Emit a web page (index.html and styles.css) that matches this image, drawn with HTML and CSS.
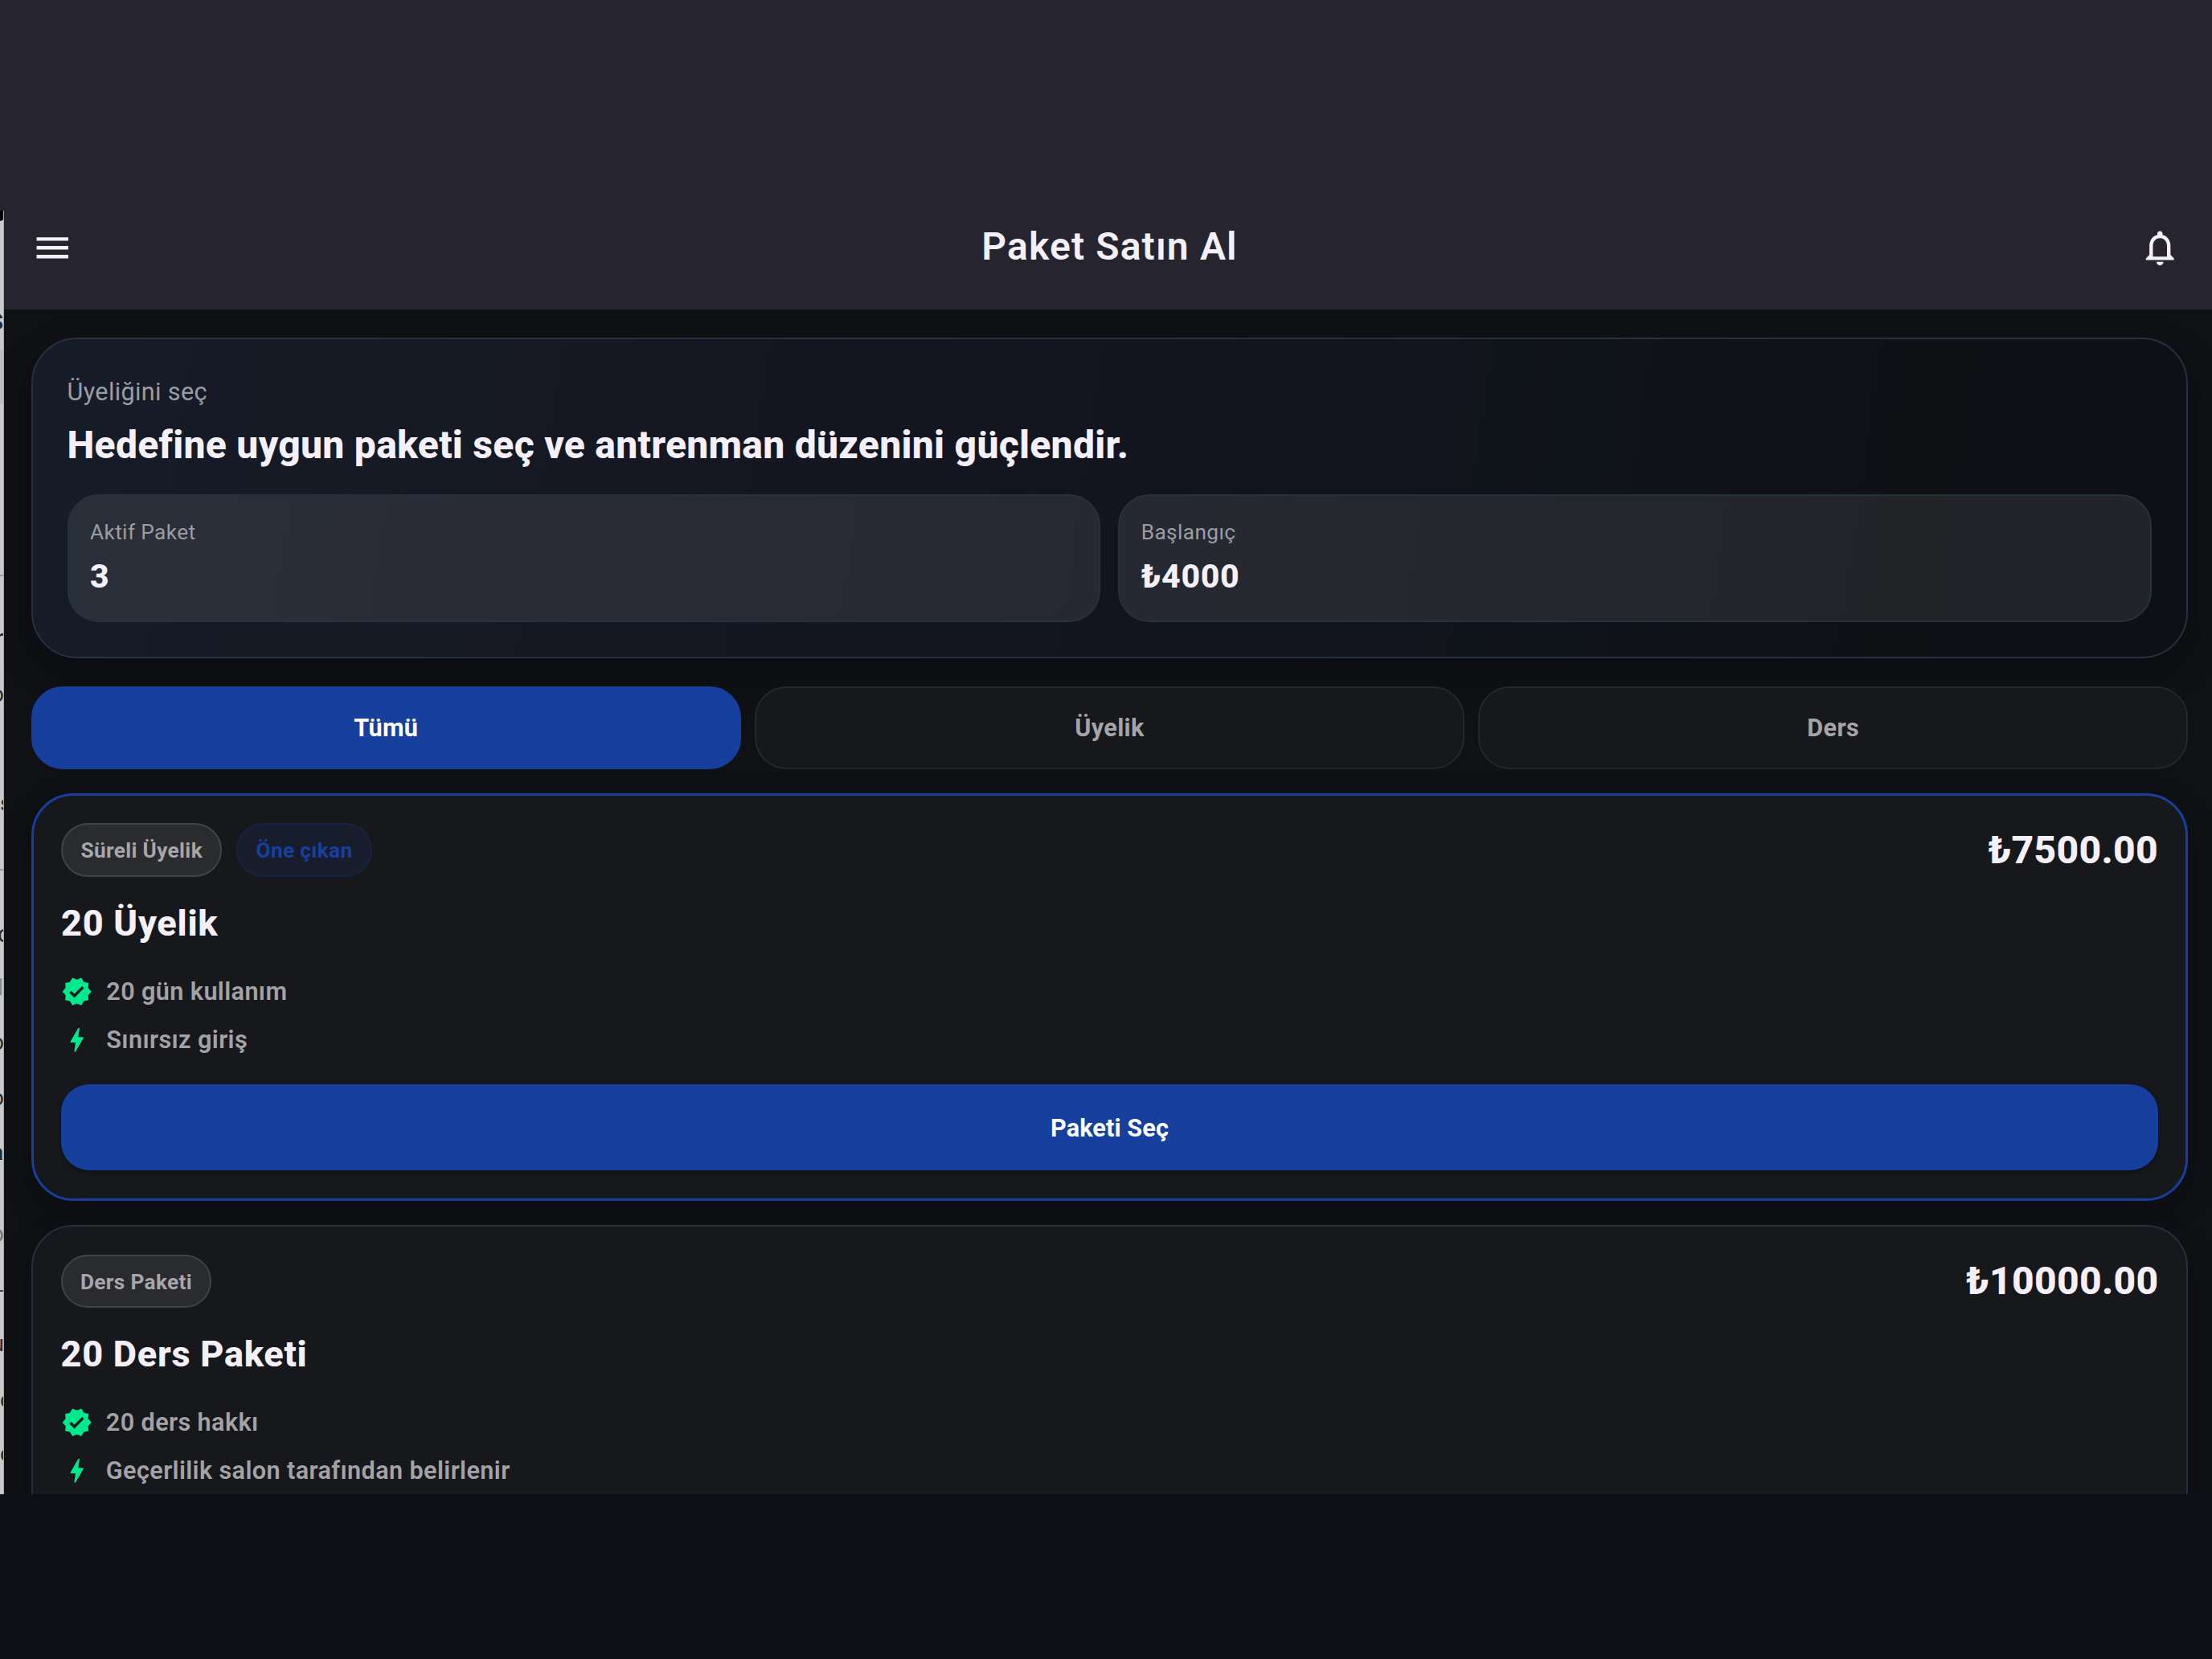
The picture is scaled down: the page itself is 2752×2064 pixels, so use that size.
FILE: index.html
```html
<!DOCTYPE html>
<html lang="tr">
    <head>
        <meta charset="utf-8">
        <title>Paket Satın Al</title>
        <link rel="stylesheet" href="styles.css">
    </head>
    <body>
        <svg width="0" height="0" class="sprite">
            <symbol id="verified" viewBox="0 0 24 24">
                <path d="M23 12l-2.44-2.79.34-3.69-3.61-.82-1.89-3.2L12 2.96 8.6 1.5 6.71 4.69 3.1 5.5l.34 3.7L1 12l2.44 2.79-.34 3.7 3.61.82L8.6 22.5l3.4-1.47 3.4 1.46 1.89-3.19 3.61-.82-.34-3.69L23 12zm-12.91 4.72l-3.8-3.81 1.48-1.48 2.32 2.33 5.85-5.87 1.48 1.48-7.33 7.35z"/>
            </symbol>
            <symbol id="bolt" viewBox="0 0 24 24">
                <path d="M11 21h-1l1-7H7.5c-.88 0-.33-.75-.31-.78C8.48 10.94 10.42 7.54 13.01 3h1l-1 7h3.51c.4 0 .62.19.4.66C12.97 17.55 11 21 11 21z"/>
            </symbol>
        </svg>

        <div class="topband"></div>
        <div class="window">
            <!-- edge of the page underneath -->
            <div class="behind">
                <i class="notch"></i>
                <i class="shade"></i>
                <i class="rule rule1"></i>
                <i class="rule rule2"></i>
                <i class="rule rule3"></i>
                <b class="g1">S</b>
                <span class="g2">r</span>
                <span class="g3">o</span>
                <span class="g4">s</span>
                <span class="g5">c</span>
                <span class="g6">l</span>
                <span class="g7">o</span>
                <span class="g8">o</span>
                <b class="g9">a</b>
                <span class="g10">o</span>
                <span class="g11">u</span>
                <span class="g12">c</span>
                <span class="g13">c</span>
            </div>
            <div class="app">
                <header class="appbar">
                    <svg class="icon menu" viewBox="0 0 24 24"><path d="M3 18h18v-2H3v2zm0-5h18v-2H3v2zm0-7v2h18V6H3z"/></svg>
                    <h1>Paket Satın Al</h1>
                    <svg class="icon bell" viewBox="0 0 24 24"><path d="M12 22c1.1 0 2-.9 2-2h-4c0 1.1.9 2 2 2zm6-6v-5c0-3.07-1.63-5.64-4.5-6.32V4c0-.83-.67-1.5-1.5-1.5s-1.5.67-1.5 1.5v.68C7.64 5.36 6 7.92 6 11v5l-2 2v1h16v-1l-2-2zm-2 1H8v-6c0-2.48 1.51-4.5 4-4.5s4 2.02 4 4.5v6z"/></svg>
                </header>
                <main class="content">
                    <section class="hero">
                        <p class="eyebrow">Üyeliğini seç</p>
                        <h2>Hedefine uygun paketi seç ve antrenman düzenini güçlendir.</h2>
                        <div class="stats">
                            <div class="stat">
                                <p>Aktif Paket</p>
                                <strong>3</strong>
                            </div>
                            <div class="stat">
                                <p>Başlangıç</p>
                                <strong>₺4000</strong>
                            </div>
                        </div>
                    </section>

                    <nav class="tabs">
                        <a class="tab active">Tümü</a>
                        <a class="tab">Üyelik</a>
                        <a class="tab">Ders</a>
                    </nav>

                    <article class="card featured">
                        <div class="card-top">
                            <span class="pill">Süreli Üyelik</span>
                            <span class="pill blue">Öne çıkan</span>
                            <span class="price">₺7500.00</span>
                        </div>
                        <h3>20 Üyelik</h3>
                        <ul>
                            <li><svg><use href="#verified"/></svg>20 gün kullanım</li>
                            <li><svg><use href="#bolt"/></svg>Sınırsız giriş</li>
                        </ul>
                        <button class="select">Paketi Seç</button>
                    </article>

                    <article class="card">
                        <div class="card-top">
                            <span class="pill">Ders Paketi</span>
                            <span class="price">₺10000.00</span>
                        </div>
                        <h3>20 Ders Paketi</h3>
                        <ul>
                            <li><svg><use href="#verified"/></svg>20 ders hakkı</li>
                            <li><svg><use href="#bolt"/></svg>Geçerlilik salon tarafından belirlenir</li>
                        </ul>
                    </article>
                </main>
            </div>
        </div>
    </body>
</html>
```
FILE: styles.css
```css
* {
    box-sizing: border-box;
}

body {
    margin: 0;
    height: 2064px;
    overflow: hidden;
    background: #0f1015;
    color: #f4f0fa;
    font-family: Roboto, sans-serif;
}

h1, h2, h3, p, ul {
    margin: 0;
    padding: 0;
}

.sprite {
    display: block;
}

.topband {
    height: 262px;
    background: #26242f;
}

.window {
    display: flex;
    height: 1597px;
    overflow: hidden;
}

/* strip of the page behind, letters are cut by its right edge */
.behind {
    position: relative;
    flex: 0 0 5px;
    background: #c9c9c9;
    border-right: 1px solid #aaa;
    overflow: hidden;
    font-size: 28px;
    line-height: 30px;
    color: #2a2a2a;
}

.behind i, .behind b, .behind span {
    position: absolute;
}

.behind .notch {
    top: 0;
    left: 0;
    width: 5px;
    height: 13px;
    background: #000;
    border-bottom-right-radius: 5px;
}

.behind .shade {
    top: 173px;
    left: 0;
    width: 5px;
    height: 68px;
    background: #bdbdbd;
}

.behind .rule {
    left: 0;
    width: 5px;
    height: 2px;
    background: #999;
}

.behind .rule1 { top: 453px; }
.behind .rule2 { top: 819px; }
.behind .rule3 { top: 1343px; background: #444; }

.behind .g1 { top: 124px; right: 0; }
.behind .g2 { top: 517px; right: -1px; font-size: 32px; }
.behind .g3 { top: 587px; right: -1px; }
.behind .g4 { top: 723px; left: 0; }
.behind .g5 { top: 885px; left: -3px; font-size: 30px; }
.behind .g6 { top: 952px; right: 0; color: #888; }
.behind .g7 { top: 1020px; right: -1px; }
.behind .g8 { top: 1089px; right: -1px; }
.behind .g9 { top: 1157px; right: 0; }
.behind .g10 { top: 1258px; right: -1px; color: #777; font-size: 30px; }
.behind .g11 { top: 1395px; right: -1px; }
.behind .g12 { top: 1465px; left: 0; }
.behind .g13 { top: 1532px; left: 0; }

.app {
    flex: 0 0 2752px;
    background: #101115;
}

.appbar {
    display: grid;
    grid-template-columns: 1fr auto 1fr;
    align-items: center;
    height: 123px;
    padding: 0 34.5px 30px 33.5px;
    background: #26242f;
}

.appbar h1 {
    padding-bottom: 4px;
    font-size: 48px;
    font-weight: 600;
    line-height: 60px;
    letter-spacing: 1.15px;
}

.icon {
    width: 52.5px;
    height: 52.5px;
    fill: #f4f0fa;
}

.bell {
    justify-self: end;
    margin-right: 9px;
}

.content {
    padding: 35px 35px 0 34px;
}

.hero {
    height: 398.7px;
    padding: 42.5px 43px 42px 42.5px;
    border: 2px solid #27313f;
    border-radius: 57px;
    background: linear-gradient(98.5deg, #151c28 0%, #151822 28%, #12151e 52%, #0f131a 72%, #0f1014 86%, #0d1016 100%);
    box-shadow: 0 18px 40px rgba(0, 5, 5, .35);
}

.eyebrow {
    padding-top: 1px;
    font-size: 30.6px;
    line-height: 44.6px;
    letter-spacing: .35px;
    color: #9b9da4;
}

.hero h2 {
    margin: 13px 0 30px;
    font-size: 48px;
    font-weight: 800;
    line-height: 62px;
    letter-spacing: .3px;
}

.stats {
    display: grid;
    grid-template-columns: 1fr 1fr;
    gap: 22px;
}

.stat {
    height: 158.5px;
    padding: 24px 26.5px;
    border: 2px solid #27323f;
    border-radius: 39px;
    background: rgba(255, 255, 255, .085);
}

.stat p {
    margin-bottom: 9px;
    font-size: 26.2px;
    line-height: 43px;
    letter-spacing: .4px;
    color: #9c9da3;
}

.stat strong {
    display: block;
    font-size: 41px;
    font-weight: 800;
    line-height: 49px;
    letter-spacing: .7px;
}

.tabs {
    display: grid;
    grid-template-columns: repeat(3, 1fr);
    gap: 17.5px;
    margin: 35px 0 30.3px;
}

.tab {
    display: flex;
    align-items: center;
    justify-content: center;
    height: 103.3px;
    padding-top: 1px;
    border: 2px solid #26272b;
    border-radius: 39px;
    background: #17181c;
    color: #a5a5a9;
    font-size: 30.6px;
    font-weight: 700;
    letter-spacing: .35px;
}

.tab.active {
    border-color: #163f9e;
    background: #163f9e;
    color: #fff;
}

.card {
    height: 507px;
    margin-bottom: 30px;
    padding: 34.5px;
    border: 2px solid #252f3c;
    border-radius: 52px;
    background: #17181c;
    box-shadow: 0 13px 35px rgba(0, 8, 10, .28);
}

.card.featured {
    border: 3px solid #163f9e;
    padding: 34px;
}

.card-top {
    display: flex;
    align-items: center;
    gap: 17.5px;
}

.pill {
    height: 66.5px;
    padding: 0 22.5px;
    border: 2px solid #424347;
    border-radius: 34px;
    background: #2a2b2f;
    color: #a7a7ab;
    font-size: 26.2px;
    font-weight: 700;
    line-height: 65px;
    letter-spacing: .35px;
}

.pill.blue {
    border-color: #162342;
    background: #171d2d;
    color: #163f9e;
}

.price {
    margin-left: auto;
    font-size: 48px;
    font-weight: 800;
    line-height: 60px;
    letter-spacing: .3px;
}

.card h3 {
    margin: 31px 0 35.5px;
    font-size: 45px;
    font-weight: 800;
    line-height: 54px;
    letter-spacing: .75px;
}

.card ul {
    list-style: none;
}

.card li {
    display: flex;
    align-items: center;
    gap: 17px;
    height: 44px;
    margin-bottom: 16.2px;
    color: #a3a3a7;
    font-size: 30.6px;
    font-weight: 600;
    letter-spacing: .4px;
}

.card li:last-child {
    margin-bottom: 0;
}

.card li svg {
    width: 39.3px;
    height: 39.3px;
    fill: #00e98c;
}

.select {
    display: block;
    width: 100%;
    height: 107.7px;
    margin-top: 33.2px;
    padding: 1px 0 0;
    border: 0;
    border-radius: 35px;
    background: #163f9e;
    box-shadow: 0 2px 5px rgba(0, 0, 0, .35);
    color: #fff;
    font-family: inherit;
    font-size: 30.6px;
    font-weight: 700;
    letter-spacing: .12px;
}
```
